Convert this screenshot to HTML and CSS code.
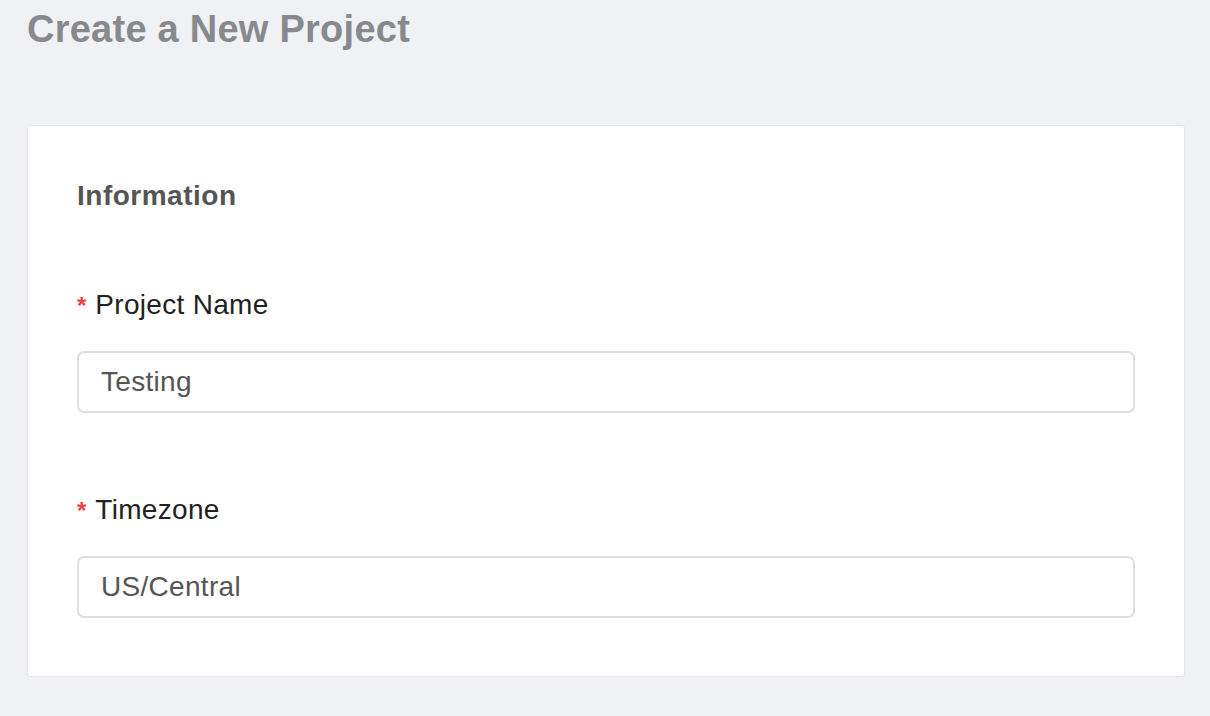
FILE: index.html
```html
<!DOCTYPE html>
<html lang="en">
<head>
<meta charset="utf-8">
<title>Create a New Project</title>
<link rel="stylesheet" href="styles.css">
</head>
<body>
<main class="page">
  <h1 class="page-title">Create a New Project</h1>
  <section class="card">
    <h2 class="card-title">Information</h2>
    <div class="field field-first">
      <label class="field-label"><span class="req">*</span>Project Name</label>
      <div class="field-input">Testing</div>
    </div>
    <div class="field">
      <label class="field-label"><span class="req">*</span>Timezone</label>
      <div class="field-input">US/Central</div>
    </div>
  </section>
</main>
</body>
</html>
```
FILE: styles.css
```css
html, body {
  margin: 0;
  padding: 0;
  background: #f0f1f5;
  font-family: "Liberation Sans", Arial, Helvetica, sans-serif;
}
.page {
  padding: 6px 25px 0 27px;
}
.page-title {
  margin: 0;
  font-size: 38px;
  line-height: 46px;
  font-weight: 700;
  letter-spacing: 0.25px;
  color: #88898c;
}
.card {
  margin-top: 73px;
  background: #fff;
  border: 1px solid #e6e6e8;
  border-radius: 3px;
  padding: 53px 49px 58px 49px;
}
.card-title {
  margin: 0;
  font-size: 28px;
  line-height: 34px;
  font-weight: 700;
  letter-spacing: 0.5px;
  color: #555555;
}
.field {
  margin-top: 80px;
}
.field-first {
  margin-top: 75px;
}
.field-label {
  display: block;
  font-size: 28px;
  line-height: 34px;
  letter-spacing: 0.3px;
  color: #222222;
}
.req {
  display: inline-block;
  color: #e8453c;
  margin-right: 9px;
  font-size: 24px;
  font-weight: 700;
  letter-spacing: 0;
}
.field-input {
  margin-top: 28px;
  height: 58px;
  border: 2px solid #dedede;
  border-radius: 7px;
  padding: 0 22px;
  display: flex;
  align-items: center;
  font-size: 28px;
  letter-spacing: 0.3px;
  color: #555555;
}
```
